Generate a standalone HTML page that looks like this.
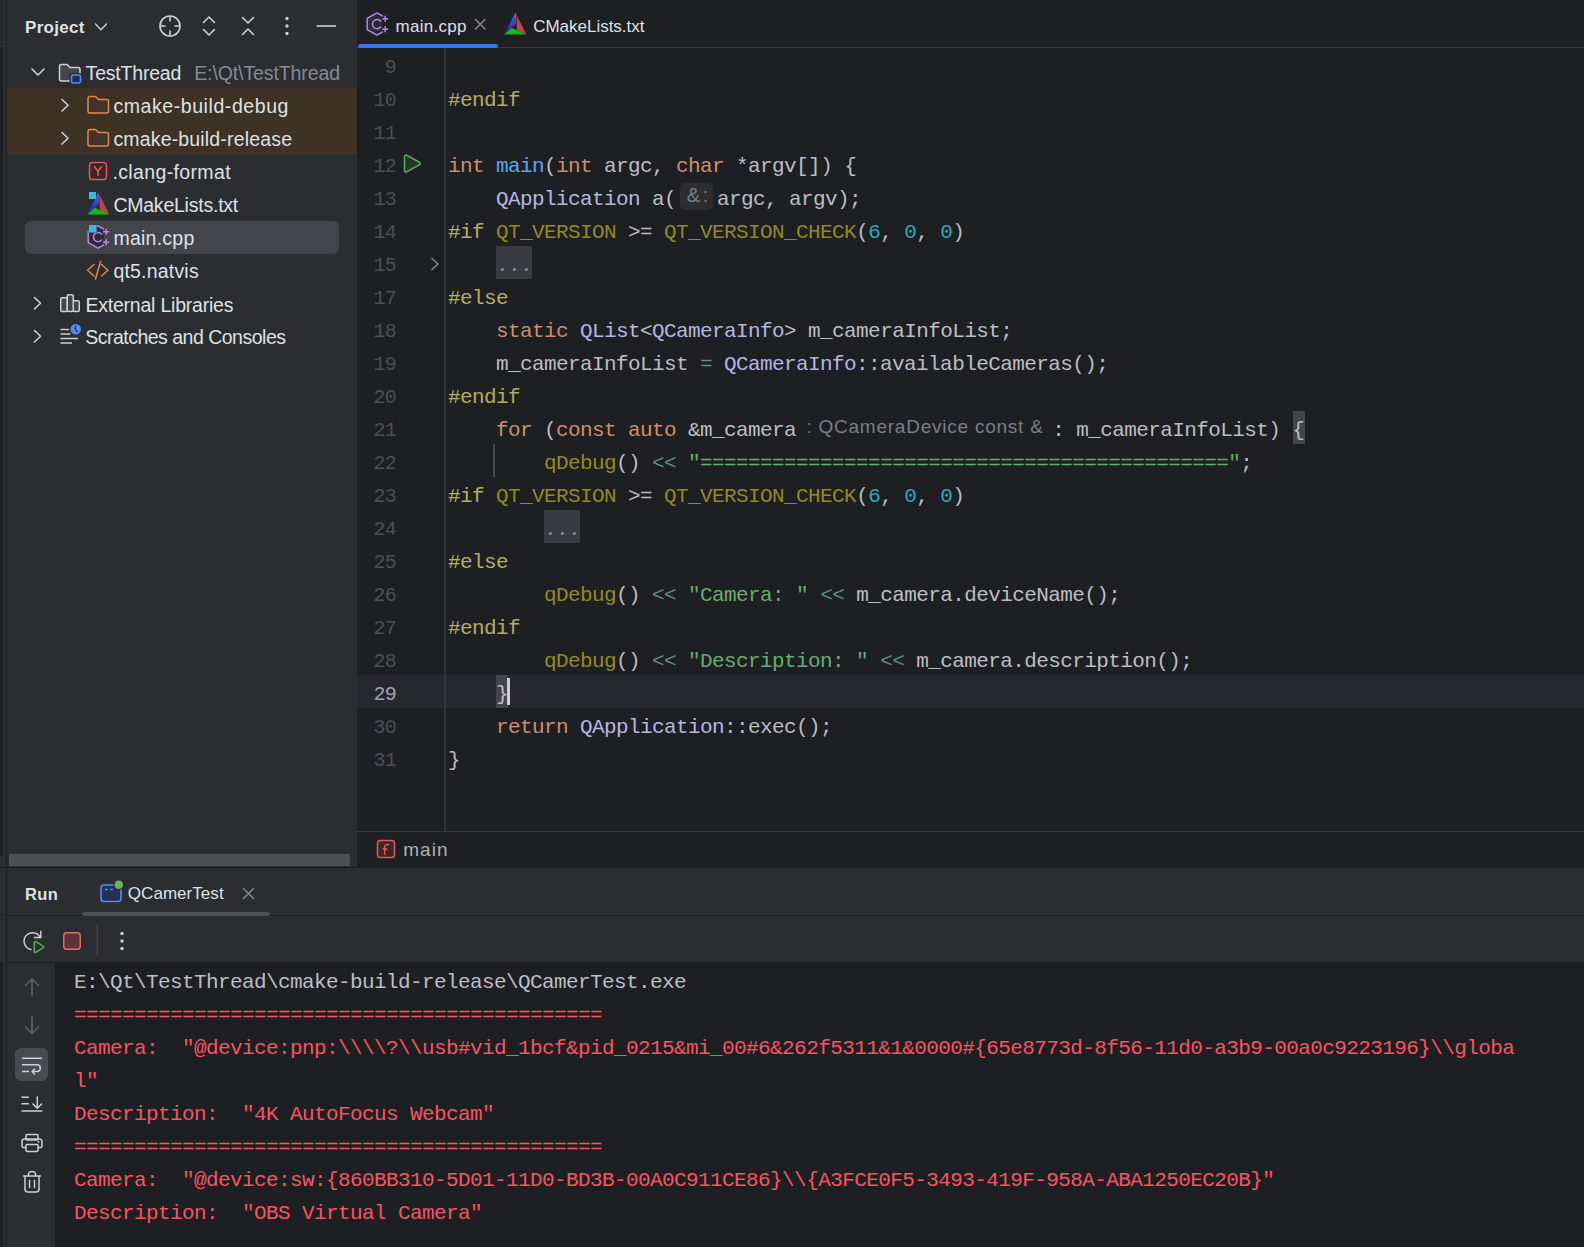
<!DOCTYPE html>
<html><head><meta charset="utf-8">
<style>
*{box-sizing:border-box}
html,body{margin:0;padding:0}
body{width:1584px;height:1247px;overflow:hidden;position:relative;background:#1E1F22;font-family:"Liberation Sans",sans-serif;color:#DFE1E5}
.a{position:absolute}
.t{position:absolute;white-space:pre;line-height:33px}
.mono{font-family:"Liberation Mono",monospace;font-size:21px;line-height:33px;white-space:pre;letter-spacing:-0.6px}
.ln{position:absolute;left:346px;width:50px;text-align:right;color:#4B5059;font-size:20px}
.cl{position:absolute;left:448px;color:#BCBEC4}
.k{color:#CF8E6D}.f{color:#56A8F5}.c{color:#B5B6E3}.p{color:#B3AE60}.m{color:#908B25}.n{color:#2AACB8}.s{color:#6AAB73}.o{color:#5F8C8A}
.con{position:absolute;left:74px;color:#F75464}
svg{position:absolute;overflow:visible}
.hb{position:absolute;background:#2B2D30;border-radius:5px}
.fold{position:absolute;background:#393B40;height:33px;width:36px}
.brb{position:absolute;background:#43454A;width:12px;height:33px}
</style></head><body>

<div class="a" style="left:0;top:0;width:3px;height:1247px;background:#1E1F22"></div>
<div class="a" style="left:0;top:0;width:3px;height:46px;background:#26282B"></div>
<div class="a" style="left:0;top:46px;width:3px;height:1px;background:#393B40"></div>
<div class="a" style="left:0;top:856px;width:3px;height:106px;background:#2B2D30"></div>
<div class="a" style="left:0;top:914px;width:3px;height:1px;background:#1E1F22"></div>
<div class="a" style="left:3px;top:0;width:3px;height:1247px;background:#2B2D30"></div>
<div class="a" style="left:6px;top:0;width:1px;height:1247px;background:#1E1F22"></div>
<div class="a" style="left:7px;top:0;width:350px;height:867px;background:#2B2D30"></div>
<div class="a" style="left:7px;top:88px;width:350px;height:66px;background:#3D3223"></div>
<div class="a" style="left:25px;top:221px;width:314px;height:33px;background:#43454A;border-radius:6px"></div>
<div class="a" style="left:357px;top:47px;width:1227px;height:1px;background:#393B40"></div>
<div class="a" style="left:358px;top:44px;width:140px;height:4px;background:#3574F0;border-radius:2px"></div>
<div class="a" style="left:357px;top:675px;width:1227px;height:33px;background:#26282E"></div>
<div class="a" style="left:444px;top:48px;width:2px;height:783px;background:#313438"></div>
<div class="a" style="left:357px;top:831px;width:1227px;height:1px;background:#393B40"></div>
<div class="a" style="left:9px;top:854px;width:341px;height:12px;background:#4D4F53"></div>
<div class="hb" style="left:680px;top:183px;width:33px;height:27px"></div>
<div class="fold" style="left:496px;top:246px"></div>
<div class="fold" style="left:544px;top:510px"></div>
<div class="brb" style="left:1293px;top:411px"></div>
<div class="brb" style="left:496px;top:675px"></div>
<div class="a" style="left:0;top:867px;width:1584px;height:1px;background:#1E1F22"></div>
<div class="a" style="left:7px;top:868px;width:1577px;height:95px;background:#2B2D30"></div>
<div class="a" style="left:7px;top:915px;width:1577px;height:1px;background:#1E1F22"></div>
<div class="a" style="left:7px;top:962px;width:1577px;height:1px;background:#1E1F22"></div>
<div class="a" style="left:7px;top:963px;width:48px;height:284px;background:#2B2D30"></div>
<div class="a" style="left:82px;top:912px;width:188px;height:4px;background:#4E5157;border-radius:2px"></div>
<div class="t" id="project" style="left:25.0px;top:11.0px;font-size:17px;color:#DFE1E5;letter-spacing:0.3px;font-weight:bold">Project</div>
<div class="t" id="t_testthread" style="left:85.6px;top:57.2px;font-size:19.5px;color:#DFE1E5;letter-spacing:-0.201px">TestThread</div>
<div class="t" id="t_path" style="left:194.2px;top:57px;font-size:19.5px;color:#868A91;letter-spacing:-0.107px">E:\Qt\TestThread</div>
<div class="t" id="t_debug" style="left:113.4px;top:90.4px;font-size:19.5px;color:#DFE1E5;letter-spacing:0.575px">cmake-build-debug</div>
<div class="t" id="t_release" style="left:113.4px;top:123.4px;font-size:19.5px;color:#DFE1E5;letter-spacing:0.167px">cmake-build-release</div>
<div class="t" id="t_clang" style="left:112.4px;top:156px;font-size:19.5px;color:#DFE1E5;letter-spacing:0.367px">.clang-format</div>
<div class="t" id="t_cmake" style="left:113.4px;top:189px;font-size:19.5px;color:#DFE1E5;letter-spacing:-0.23px">CMakeLists.txt</div>
<div class="t" id="t_main" style="left:113.4px;top:222px;font-size:19.5px;color:#DFE1E5;letter-spacing:0.255px">main.cpp</div>
<div class="t" id="t_natvis" style="left:113.4px;top:255px;font-size:19.5px;color:#DFE1E5;letter-spacing:0.198px">qt5.natvis</div>
<div class="t" id="t_ext" style="left:85.4px;top:289.0px;font-size:19.5px;color:#DFE1E5;letter-spacing:-0.213px">External Libraries</div>
<div class="t" id="t_scratch" style="left:85.2px;top:321px;font-size:19.5px;color:#DFE1E5;letter-spacing:-0.504px">Scratches and Consoles</div>
<div class="t" id="tab_main" style="left:395.6px;top:10px;font-size:17px;color:#DFE1E5;letter-spacing:0.285px">main.cpp</div>
<div class="t" id="tab_cmake" style="left:533.2px;top:9.8px;font-size:17px;color:#DFE1E5;letter-spacing:-0.013px">CMakeLists.txt</div>
<div class="t" id="crumb" style="left:403.2px;top:833px;font-size:19px;color:#B0B2B8;letter-spacing:1.066px">main</div>
<div class="t" id="run" style="left:25.0px;top:878.2px;font-size:16.5px;color:#DFE1E5;letter-spacing:0.4px;font-weight:bold">Run</div>
<div class="t" id="qcamer" style="left:127.8px;top:877.4px;font-size:17px;color:#DFE1E5;letter-spacing:0.045px">QCamerTest</div>
<div class="t" id="h13" style="left:686.8px;top:179.4px;font-size:20px;color:#7A7E85;letter-spacing:2.6px">&amp;:</div>
<div class="t" id="h21" style="left:806.4px;top:410.2px;font-size:19px;color:#7A7E85;letter-spacing:0.765px">: QCameraDevice const &amp;</div>
<div class="mono">
<div class="ln" style="top:51px;letter-spacing:-0.8px">9</div>
<div class="ln" style="top:84px;letter-spacing:-0.8px">10</div>
<div class="cl" style="top:84px"><span class="p">#endif</span></div>
<div class="ln" style="top:117px;letter-spacing:-0.8px">11</div>
<div class="ln" style="top:150px;letter-spacing:-0.8px">12</div>
<div class="cl" style="top:150px"><span class="k">int</span> <span class="f">main</span>(<span class="k">int</span> argc, <span class="k">char</span> *argv[]) {</div>
<div class="ln" style="top:183px;letter-spacing:-0.8px">13</div>
<div class="cl" style="top:183px">    <span class="c">QApplication</span> a(<span style="display:inline-block;width:41px"></span>argc, argv);</div>
<div class="ln" style="top:216px;letter-spacing:-0.8px">14</div>
<div class="cl" style="top:216px"><span class="p">#if</span> <span class="m">QT_VERSION</span> &gt;= <span class="m">QT_VERSION_CHECK</span>(<span class="n">6</span>, <span class="n">0</span>, <span class="n">0</span>)</div>
<div class="ln" style="top:249px;letter-spacing:-0.8px">15</div>
<div class="cl" style="top:249px">    <span style="color:#868A91">...</span></div>
<div class="ln" style="top:282px;letter-spacing:-0.8px">17</div>
<div class="cl" style="top:282px"><span class="p">#else</span></div>
<div class="ln" style="top:315px;letter-spacing:-0.8px">18</div>
<div class="cl" style="top:315px">    <span class="k">static</span> <span class="c">QList</span>&lt;<span class="c">QCameraInfo</span>&gt; m_cameraInfoList;</div>
<div class="ln" style="top:348px;letter-spacing:-0.8px">19</div>
<div class="cl" style="top:348px">    m_cameraInfoList <span class="o">=</span> <span class="c">QCameraInfo</span>::availableCameras();</div>
<div class="ln" style="top:381px;letter-spacing:-0.8px">20</div>
<div class="cl" style="top:381px"><span class="p">#endif</span></div>
<div class="ln" style="top:414px;letter-spacing:-0.8px">21</div>
<div class="cl" style="top:414px">    <span class="k">for</span> (<span class="k">const</span> <span class="k">auto</span> &amp;m_camera<span style="display:inline-block;width:244px"></span> : m_cameraInfoList) {</div>
<div class="ln" style="top:447px;letter-spacing:-0.8px">22</div>
<div class="cl" style="top:447px">        <span class="m">qDebug</span>() <span class="o">&lt;&lt;</span> <span class="s">"============================================"</span>;</div>
<div class="ln" style="top:480px;letter-spacing:-0.8px">23</div>
<div class="cl" style="top:480px"><span class="p">#if</span> <span class="m">QT_VERSION</span> &gt;= <span class="m">QT_VERSION_CHECK</span>(<span class="n">6</span>, <span class="n">0</span>, <span class="n">0</span>)</div>
<div class="ln" style="top:513px;letter-spacing:-0.8px">24</div>
<div class="cl" style="top:513px">        <span style="color:#868A91">...</span></div>
<div class="ln" style="top:546px;letter-spacing:-0.8px">25</div>
<div class="cl" style="top:546px"><span class="p">#else</span></div>
<div class="ln" style="top:579px;letter-spacing:-0.8px">26</div>
<div class="cl" style="top:579px">        <span class="m">qDebug</span>() <span class="o">&lt;&lt;</span> <span class="s">"Camera: "</span> <span class="o">&lt;&lt;</span> m_camera.deviceName();</div>
<div class="ln" style="top:612px;letter-spacing:-0.8px">27</div>
<div class="cl" style="top:612px"><span class="p">#endif</span></div>
<div class="ln" style="top:645px;letter-spacing:-0.8px">28</div>
<div class="cl" style="top:645px">        <span class="m">qDebug</span>() <span class="o">&lt;&lt;</span> <span class="s">"Description: "</span> <span class="o">&lt;&lt;</span> m_camera.description();</div>
<div class="ln" style="top:678px;color:#A1A3AB;letter-spacing:-0.8px">29</div>
<div class="cl" style="top:678px">    }</div>
<div class="ln" style="top:711px;letter-spacing:-0.8px">30</div>
<div class="cl" style="top:711px">    <span class="k">return</span> <span class="c">QApplication</span>::exec();</div>
<div class="ln" style="top:744px;letter-spacing:-0.8px">31</div>
<div class="cl" style="top:744px">}</div>
<div class="con" style="top:966px;color:#BCBEC4">E:\Qt\TestThread\cmake-build-release\QCamerTest.exe</div>
<div class="con" style="top:999px">============================================</div>
<div class="con" style="top:1032px">Camera:  "@device:pnp:\\\\?\\usb#vid_1bcf&amp;pid_0215&amp;mi_00#6&amp;262f5311&amp;1&amp;0000#{65e8773d-8f56-11d0-a3b9-00a0c9223196}\\globa</div>
<div class="con" style="top:1065px">l"</div>
<div class="con" style="top:1098px">Description:  "4K AutoFocus Webcam"</div>
<div class="con" style="top:1131px">============================================</div>
<div class="con" style="top:1164px">Camera:  "@device:sw:{860BB310-5D01-11D0-BD3B-00A0C911CE86}\\{A3FCE0F5-3493-419F-958A-ABA1250EC20B}"</div>
<div class="con" style="top:1197px">Description:  "OBS Virtual Camera"</div>
</div>
<svg style="left:0;top:0" width="1584" height="1247" viewBox="0 0 1584 1247" fill="none" stroke-linecap="round" stroke-linejoin="round">
<defs><linearGradient id="gb" x1="0" y1="0" x2="0" y2="1"><stop offset="0" stop-color="#6066D0"/><stop offset="1" stop-color="#1C1CA8"/></linearGradient></defs>
<g stroke="#CED0D6" stroke-width="1.6">
 <path d="M95.5 24l5.5 5.75 5.5-5.75" stroke-width="1.4"/>
 <circle cx="170" cy="26" r="10"/>
 <path d="M170 16.5v4.5M170 31v4.5M160.5 26h4.5M175 26h4.5"/>
 <path d="M203.5 22.5l5.5-5.5 5.5 5.5M203.5 29.5l5.5 5.5 5.5-5.5"/>
 <path d="M242.5 17.5l5.5 5.5 5.5-5.5M242.5 34.5l5.5-5.5 5.5 5.5"/>
 <path d="M316.5 26h19.5" stroke-linecap="butt"/>
 <path d="M32 69l6 6 6-6"/>
 <path d="M62 99.5l6 5.75-6 5.75"/>
 <path d="M62 132.5l6 5.75-6 5.75"/>
 <path d="M34.5 297.5l6 5.75-6 5.75"/>
 <path d="M34.5 330.5l6 5.75-6 5.75"/>
</g>
<g fill="#CED0D6"><circle cx="287" cy="18.5" r="1.7"/><circle cx="287" cy="26" r="1.7"/><circle cx="287" cy="33.5" r="1.7"/></g>
<!-- TestThread folder -->
<path d="M59.5 66.5a2 2 0 0 1 2-2h5.5l3 3h8a2 2 0 0 1 2 2v9.5a2 2 0 0 1-2 2h-16.5a2 2 0 0 1-2-2z" fill="#43454A" stroke="#CED0D6" stroke-width="1.5"/>
<rect x="70.5" y="74" width="11" height="10" rx="2.5" fill="#2B2D30" stroke="#2B2D30" stroke-width="2"/>
<rect x="71.5" y="75" width="9" height="8" rx="2" fill="#25324D" stroke="#548AF7" stroke-width="1.6"/>
<!-- orange folders -->
<path id="of" d="M88 98.5a2 2 0 0 1 2-2h5.5l3 3h8a2 2 0 0 1 2 2v9.5a2 2 0 0 1-2 2h-16.5a2 2 0 0 1-2-2z" fill="#45322B" stroke="#E08855" stroke-width="1.5"/>
<path d="M88 131.5a2 2 0 0 1 2-2h5.5l3 3h8a2 2 0 0 1 2 2v9.5a2 2 0 0 1-2 2h-16.5a2 2 0 0 1-2-2z" fill="#45322B" stroke="#E08855" stroke-width="1.5"/>
<!-- clang-format -->
<rect x="89.5" y="162.5" width="17" height="17" rx="3" fill="#3D2526" stroke="#DB5C5C" stroke-width="1.5"/>
<path d="M94.3 166.3L98 171.5 101.7 166.3M98 171.5V176" stroke="#DB5C5C" stroke-width="1.5" stroke-linecap="butt"/>
<!-- cmake tree -->
<g id="cm">
<polygon points="98.2,193 87,214.5 94.6,207.8 99,204 99,193.5" fill="url(#gb)"/>
<polygon points="98.6,193 109.3,214.5 100,210.3 99.6,204 99.4,193.5" fill="#C04646"/>
<polygon points="87,214.5 94.6,207.8 109.3,214.5" fill="#16B816"/>
</g>
<rect x="89" y="192" width="7" height="7" fill="#3FB6DC"/>
<!-- main.cpp tree icon -->
<g transform="translate(83,221)" stroke="#B589EC" stroke-width="1.5" fill="none">
 <polygon points="14.9,4.8 20.7,8.1 20.7,23.9 14.9,27.2 5.2,21.6 5.2,10.4" fill="#2F2A3A" stroke="none"/>
 <path d="M20.4 7.9L14.9 4.8 5.2 10.4V21.6L14.9 27.2 20.4 24.1"/>
 <path d="M18.62 13.14A4.6 4.6 0 1 0 18.62 19.06"/>
 <path d="M23.2 7.2v7M19.7 10.7h7M23.2 17.8v7M19.7 21.3h7" stroke="#43454A" stroke-width="3.5" stroke-linecap="butt"/>
 <path d="M23.2 7.7v6M20.2 10.7h6M23.2 18.3v6M20.2 21.3h6" stroke-linecap="butt"/>
</g>
<rect x="88.5" y="224.5" width="8.5" height="8.5" fill="#43454A"/><rect x="89" y="225" width="7.5" height="7.5" fill="#3FB6DC"/>
<!-- natvis -->
<path d="M94 264.5l-6.5 5.75 6.5 5.75M101.5 264.5l6.5 5.75-6.5 5.75M100.5 261.5l-5 17.5" stroke="#D1875A" stroke-width="1.6"/>
<!-- ext libs -->
<g stroke="#CED0D6" stroke-width="1.5" fill="#43454A">
 <rect x="60.75" y="297.75" width="6.5" height="13.75" rx="1.2"/>
 <rect x="73.25" y="300.75" width="6" height="10.75" rx="1.2"/>
 <rect x="67.25" y="294.75" width="6" height="16.75" rx="1.2"/>
</g>
<!-- scratches -->
<path d="M60.5 329.5h8.5M60.5 334h10M60.5 338.5h17.5M60.5 343h11.5" stroke="#CED0D6" stroke-width="1.6" stroke-linecap="butt"/>
<circle cx="75.7" cy="329.2" r="6.2" fill="#2B2D30"/><circle cx="75.7" cy="329.2" r="5.3" fill="#548AF7"/>
<path d="M75.5 325.8v3.9l2.3 2.2" stroke="#2B2D30" stroke-width="1.3" stroke-linecap="butt"/>

<!-- tab icons -->
<g transform="translate(362,8)" stroke="#B589EC" stroke-width="1.5" fill="none">
 <polygon points="14.9,4.8 20.7,8.1 20.7,23.9 14.9,27.2 5.2,21.6 5.2,10.4" fill="#2F2A3A" stroke="none"/>
 <path d="M20.4 7.9L14.9 4.8 5.2 10.4V21.6L14.9 27.2 20.4 24.1"/>
 <path d="M18.62 13.14A4.6 4.6 0 1 0 18.62 19.06"/>
 <path d="M23.2 7.2v7M19.7 10.7h7M23.2 17.8v7M19.7 21.3h7" stroke="#1E1F22" stroke-width="3.5" stroke-linecap="butt"/>
 <path d="M23.2 7.7v6M20.2 10.7h6M23.2 18.3v6M20.2 21.3h6" stroke-linecap="butt"/>
</g>
<path d="M475.5 19.5l9.5 9.5M485 19.5l-9.5 9.5" stroke="#868A91" stroke-width="1.5"/>
<use href="#cm" transform="translate(417,-180)"/>
<!-- gutter play -->
<path d="M404.5 156.5v14a1.5 1.5 0 0 0 2.3 1.3l12.6-7a1.5 1.5 0 0 0 0-2.6l-12.6-7a1.5 1.5 0 0 0-2.3 1.3z" fill="#253627" stroke="#57A65F" stroke-width="1.6"/>
<!-- fold arrow -->
<path d="M432 258.5l6 5.5-6 5.5" stroke="#868A91" stroke-width="1.5"/>
<!-- indent guide -->
<rect x="493" y="444" width="2" height="33" fill="#4A4D52"/>
<!-- caret -->
<rect x="507" y="678" width="3" height="27" fill="#CED0D6"/>
<!-- breadcrumb f -->
<rect x="377.5" y="840.5" width="17" height="17" rx="3" fill="#3D2526" stroke="#DB5C5C" stroke-width="1.5"/>
<path d="M389 845.2a2.5 2.5 0 0 0-4.3 1.6v8M382.5 849h5" stroke="#DB5C5C" stroke-width="1.5" stroke-linecap="butt"/>
<!-- run tab icon -->
<rect x="101" y="885" width="20" height="16.5" rx="3" fill="#25324D" stroke="#548AF7" stroke-width="1.6"/>
<path d="M105 889.5h3M110 889.5h3" stroke="#548AF7" stroke-width="1.5" stroke-linecap="butt"/>
<circle cx="118.8" cy="884.7" r="5.5" fill="#2B2D30"/>
<circle cx="118.8" cy="884.7" r="4.3" fill="#5FB865"/>
<path d="M243.5 888.5l10 10M253.5 888.5l-10 10" stroke="#868A91" stroke-width="1.5"/>
<!-- rerun -->
<path d="M31 949.5a8.5 8.5 0 1 1 9-12.5" stroke="#CED0D6" stroke-width="1.5"/>
<path d="M40.8 930.8v6.7h-6.7" stroke="#CED0D6" stroke-width="1.5" stroke-linecap="butt" stroke-linejoin="miter"/>
<path d="M34.3 942.5v9a1 1 0 0 0 1.5 .9l7.3-4.5a1 1 0 0 0 0-1.8l-7.3-4.5a1 1 0 0 0-1.5 .9z" fill="#253627" stroke="#57A65F" stroke-width="1.6"/>
<!-- stop -->
<rect x="63.75" y="932.75" width="16.5" height="16.5" rx="3" fill="#5C3336" stroke="#E06C6C" stroke-width="1.5"/>
<rect x="96.5" y="925" width="1.5" height="30" fill="#43454A"/>
<g fill="#CED0D6"><circle cx="122" cy="933.5" r="1.7"/><circle cx="122" cy="941" r="1.7"/><circle cx="122" cy="948.5" r="1.7"/></g>
<!-- console left tools -->
<path d="M32 995.5v-16.5M25.5 985.5l6.5-6.5 6.5 6.5" stroke="#62666D" stroke-width="1.5"/>
<path d="M32 1017v16.5M25.5 1027l6.5 6.5 6.5-6.5" stroke="#62666D" stroke-width="1.5"/>
<rect x="15" y="1048" width="33" height="33" rx="6" fill="#494B50"/>
<path d="M22 1058.2h20M22 1071.5h7M22 1064.8h15.5a3.4 3.4 0 0 1 0 6.7h-5" stroke="#CED0D6" stroke-width="1.5" stroke-linecap="butt"/>
<path d="M34.5 1069l-2.5 2.5 2.5 2.5" stroke="#CED0D6" stroke-width="1.5"/>
<path d="M21.5 1097.2h7.3M21.5 1103.8h7.3M21.5 1110.9h20.8M37.3 1096.5v12M32.5 1103.5l4.8 4.8 4.8-4.8" stroke="#CED0D6" stroke-width="1.5" stroke-linecap="butt"/>
<g stroke="#CED0D6" stroke-width="1.5">
 <rect x="26" y="1134.5" width="12" height="5.5" rx="1"/>
 <path d="M26 1147.5h-2.5a1.5 1.5 0 0 1-1.5-1.5v-4.5a2.5 2.5 0 0 1 2.5-2.5h15a2.5 2.5 0 0 1 2.5 2.5v4.5a1.5 1.5 0 0 1-1.5 1.5h-2.5"/>
 <rect x="26" y="1144.5" width="12" height="7" rx="1"/>
</g>
<circle cx="38.5" cy="1142" r="0.9" fill="#CED0D6"/>
<g stroke="#CED0D6" stroke-width="1.5">
 <path d="M23.5 1176h17M28.5 1176v-1.5a3.5 3 0 0 1 7 0v1.5"/>
 <path d="M25 1176.5v12.5a3 3 0 0 0 3 3h8a3 3 0 0 0 3-3v-12.5"/>
 <path d="M29.5 1180.5v7M34.5 1180.5v7"/>
</g>
</svg>
</body></html>
